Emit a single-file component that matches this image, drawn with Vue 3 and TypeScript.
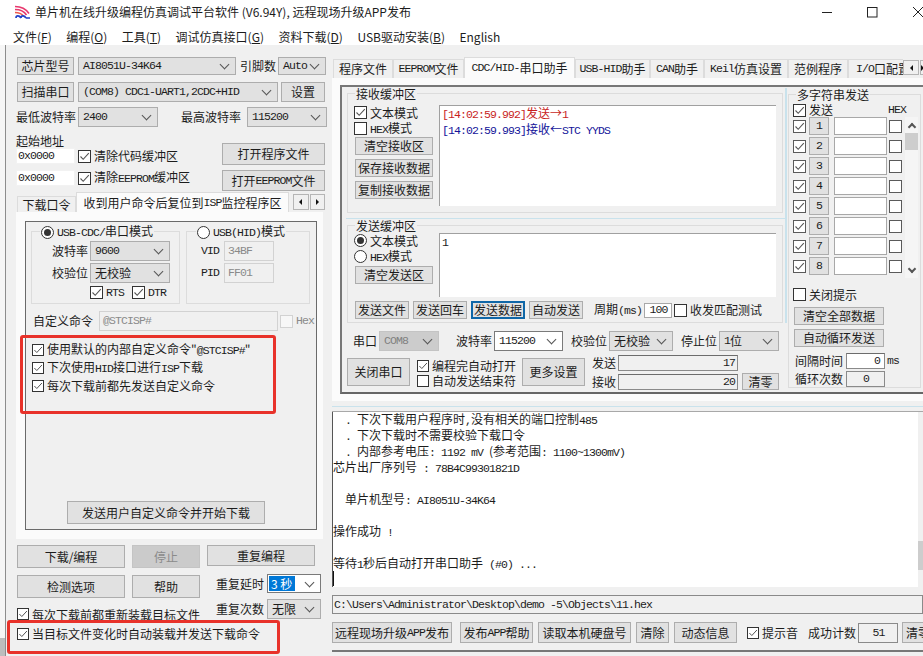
<script setup lang="ts">
const slots: number[] = [1, 2, 3, 4, 5, 6, 7, 8]
</script>

<template>
  <div class="win">
    <header class="title">
      <svg class="appicon" width="15" height="14" viewBox="0 0 15 14">
        <path d="M0 1.500C6 1.500 11 4 14 8.500" fill="none" stroke="#e8386e" stroke-width="1.600" />
        <path d="M0 4.500C5 4.500 9 6 11.500 10" fill="none" stroke="#e8386e" stroke-width="1.600" />
        <path d="M0 7.500C3.500 7.500 6.500 8.500 8.500 11" fill="none" stroke="#ee5a4a" stroke-width="1.600" />
        <path d="M1 13C1 10.500 4 10 6 13M6 13C6 10.500 9 10 11 13M11 13H15" fill="none" stroke="#2342c8" stroke-width="1.700" />
      </svg>
      <span class="ttext">单片机在线升级编程仿真调试平台软件 (V6.94Y), 远程现场升级APP发布</span>
      <div class="caps">
        <svg width="101" height="12" viewBox="0 0 101 12">
          <path d="M0 6.500H10" stroke="#222" fill="none" />
          <rect x="45.500" y="1.500" width="9.500" height="9.500" stroke="#222" fill="none" />
          <path d="M91 1L101 11M101 1L91 11" stroke="#222" fill="none" />
        </svg>
      </div>
    </header>
    <nav class="menu">
      <span>文件(<u>F</u>)</span>
      <span>编程(<u>O</u>)</span>
      <span>工具(<u>T</u>)</span>
      <span>调试仿真接口(<u>G</u>)</span>
      <span>资料下载(<u>D</u>)</span>
      <span>USB驱动安装(<u>B</u>)</span>
      <span>English</span>
    </nav>

    <div class="client">
      <div class="strip"></div>

      <section class="left">
        <div class="row h18 mt12 pl11">
          <button class="btn w57 h18">芯片型号</button>
          <div class="sel w158 h18 ml4"><span class="m">AI8051U-34K64</span></div>
          <span class="w36 ml4">引脚数</span>
          <div class="sel w48 h18 ml2"><span class="m">Auto</span></div>
        </div>
        <div class="row h20 mt7 pl11">
          <button class="btn w57 h20">扫描串口</button>
          <div class="sel w200 h20 ml4"><span class="m">(COM8) CDC1-UART1,2CDC+HID</span></div>
          <button class="btn w44 h20 ml3">设置</button>
        </div>
        <div class="row h20 mt5 pl10">
          <span class="w60">最低波特率</span>
          <div class="sel w80 h20 ml2"><span class="m">2400</span></div>
          <span class="w60 ml23">最高波特率</span>
          <div class="sel w80 h20 ml6"><span class="m">115200</span></div>
        </div>
        <div class="addr">
          <div class="addrl">
            <div class="row h14">起始地址</div>
            <div class="row h16">
              <div class="field w59 h16"><span class="m">0x0000</span></div>
              <i class="chk on ml3"></i><span class="ml3">清除代码缓冲区</span>
            </div>
            <div class="row h16 mt6">
              <div class="field w59 h16"><span class="m">0x0000</span></div>
              <i class="chk on ml3"></i><span class="ml3">清除<span class="m">EEPROM</span>缓冲区</span>
            </div>
          </div>
          <div class="addrr">
            <button class="btn w103 h22">打开程序文件</button>
            <button class="btn w103 h21 mt5">打开<span class="m">EEPROM</span>文件</button>
          </div>
        </div>

        <div class="ltabs">
          <div class="tab w59 h16">下载口令</div>
          <div class="tab on w213 h20">收到用户命令后复位到<span class="m">ISP</span>监控程序区</div>
          <div class="scroller ml4 w32">
            <span class="arr"><i class="tri l"></i></span>
            <span class="arr"><i class="tri r"></i></span>
          </div>
        </div>
        <div class="tabpanel">
          <div class="inner">
            <div class="groups">
              <div class="group g1">
                <div class="legend ml8"><i class="radio on"></i><span class="ml3"><span class="m">USB-CDC/</span>串口模式</span></div>
                <div class="row h20 mt2 pl20">
                  <span class="w36">波特率</span>
                  <div class="sel w80 h20 ml2"><span class="m">9600</span></div>
                </div>
                <div class="row h20 mt2 pl20">
                  <span class="w36">校验位</span>
                  <div class="sel w80 h20 ml2">无校验</div>
                </div>
                <div class="row h13 mt3 pl58">
                  <i class="chk on"></i><span class="m ml3">RTS</span>
                  <i class="chk on ml8"></i><span class="m ml3">DTR</span>
                </div>
              </div>
              <div class="group g2">
                <div class="legend ml9"><i class="radio"></i><span class="ml3"><span class="m">USB(HID)</span>模式</span></div>
                <div class="row h20 mt2 pl14">
                  <span class="m w18">VID</span>
                  <div class="field dim w50 h20 ml5"><span class="m">34BF</span></div>
                </div>
                <div class="row h20 mt2 pl14">
                  <span class="m w18">PID</span>
                  <div class="field dim w50 h20 ml5"><span class="m">FF01</span></div>
                </div>
              </div>
            </div>
            <div class="row h20 mt7 pl7">
              <span class="w60">自定义命令</span>
              <div class="field dim w179 h20 ml6"><span class="m">@STCISP#</span></div>
              <i class="chk dimchk ml2"></i><span class="m greyt ml3">Hex</span>
            </div>
            <div class="row h18 mt10 pl6"><i class="chk on s12"></i><span class="ml3">使用默认的内部自定义命令"<span class="m">@STCISP#</span>"</span></div>
            <div class="row h18 pl6"><i class="chk on s12"></i><span class="ml3">下次使用<span class="m">HID</span>接口进行<span class="m">ISP</span>下载</span></div>
            <div class="row h18 pl6"><i class="chk on s12"></i><span class="ml3">每次下载前都先发送自定义命令</span></div>
            <button class="btn w198 h23 sendbtn">发送用户自定义命令并开始下载</button>
          </div>
        </div>

        <div class="actions">
          <div class="actl">
            <div class="row h23">
              <button class="btn w108 h23">下载/编程</button>
              <button class="btn off w68 h23 ml7">停止</button>
            </div>
            <div class="row h23 mt7">
              <button class="btn w108 h23">检测选项</button>
              <button class="btn w68 h23 ml7">帮助</button>
            </div>
            <div class="row h12 mt10 clip"><i class="chk on s12"></i><span class="ml3">每次下载前都重新装载目标文件</span></div>
          </div>
          <div class="actr">
            <button class="btn w108 h21">重复编程</button>
            <div class="row h19 mt8">
              <span class="w48 ml9">重复延时</span>
              <div class="sel white w54 h19 ml3"><b class="hl">3 秒</b></div>
            </div>
            <div class="row h20 mt6">
              <span class="w48 ml9">重复次数</span>
              <div class="sel w54 h20 ml3">无限</div>
            </div>
          </div>
        </div>
        <div class="row h14 mt7 pl11"><i class="chk on s12"></i><span class="ml3">当目标文件变化时自动装载并发送下载命令</span></div>

        <div class="mark m1"></div>
        <div class="mark m2"></div>
      </section>

      <section class="right">
        <div class="rtabs">
          <div class="tab w60 h19 firsttab">程序文件</div>
          <div class="tab w71 h19"><span class="m">EEPROM</span>文件</div>
          <div class="tab on w111 h21"><span class="m">CDC/HID-</span>串口助手</div>
          <div class="tab w75 h19"><span class="m">USB-HID</span>助手</div>
          <div class="tab w54 h19"><span class="m">CAN</span>助手</div>
          <div class="tab w84 h19"><span class="m">Keil</span>仿真设置</div>
          <div class="tab w60 h19">范例程序</div>
          <div class="tab cut w55 h19"><span class="m">I/O</span>口配置</div>
          <div class="scroller rscroll w20">
            <span class="arr w16f"><i class="tri l"></i></span>
            <span class="arr"><i class="tri r"></i></span>
          </div>
        </div>

        <div class="rp">
          <div class="pane">
            <div class="pl">
              <div class="group recv">
                <div class="legend ml7">接收缓冲区</div>
                <div class="gbody">
                  <div class="gcol">
                    <div class="row h13 mt1"><i class="chk on"></i><span class="ml3">文本模式</span></div>
                    <div class="row h13 mt3"><i class="chk"></i><span class="ml3"><span class="m">HEX</span>模式</span></div>
                    <button class="btn w78 h18 mt2 gbtn">清空接收区</button>
                    <button class="btn w78 h18 mt4 gbtn">保存接收数据</button>
                    <button class="btn w78 h18 mt4 gbtn">复制接收数据</button>
                  </div>
                  <div class="ta recvta">
                    <div class="red"><span class="m">[14:02:59.992]</span>发送→<span class="m">1</span></div>
                    <div class="navy"><span class="m">[14:02:59.993]</span>接收←<span class="m">STC YYDS</span></div>
                  </div>
                </div>
              </div>
              <div class="hline"></div>
              <div class="group send">
                <div class="legend ml7">发送缓冲区</div>
                <div class="gbody nomt">
                  <div class="gcol">
                    <div class="row h13 mt1"><i class="radio on"></i><span class="ml3">文本模式</span></div>
                    <div class="row h13 mt3"><i class="radio"></i><span class="ml3"><span class="m">HEX</span>模式</span></div>
                    <button class="btn w78 h18 mt3 gbtn">清空发送区</button>
                  </div>
                  <div class="ta sendta"><div><span class="m">1</span></div></div>
                </div>
                <div class="row h18 mt4 pl7">
                  <button class="btn w54 h18">发送文件</button>
                  <button class="btn w54 h18 ml4">发送回车</button>
                  <button class="btn focus w54 h18 ml4">发送数据</button>
                  <button class="btn w54 h18 ml4">自动发送</button>
                  <span class="ml11">周期<span class="m">(ms)</span></span>
                  <div class="field w28 h15 ml2 center"><span class="m">100</span></div>
                  <i class="chk ml2"></i><span class="ml3">收发匹配测试</span>
                </div>
              </div>
              <div class="row h20 mt8 pl11">
                <span class="w24">串口</span>
                <div class="sel off w60 h20 ml2"><span class="m">COM8</span></div>
                <span class="w36 ml17">波特率</span>
                <div class="sel white w69 h20 ml2"><span class="m">115200</span></div>
                <span class="w36 ml8">校验位</span>
                <div class="sel w64 h20 ml2">无校验</div>
                <span class="w36 ml8">停止位</span>
                <div class="sel w60 h20 ml2"><span class="m">1</span>位</div>
              </div>
              <div class="sreg">
                <button class="btn w63 h28 mt3">关闭串口</button>
                <div class="sregc">
                  <div class="row h13 mt4"><i class="chk on s12"></i><span class="ml3">编程完自动打开</span></div>
                  <div class="row h13 mt2"><i class="chk s12"></i><span class="ml3">自动发送结束符</span></div>
                </div>
                <button class="btn w63 h28 mt3">更多设置</button>
                <div class="count">
                  <div class="row h16">
                    <span class="w26">发送</span>
                    <div class="field num w120 h16"><span class="m">17</span></div>
                  </div>
                  <div class="row h17 mt2">
                    <span class="w26">接收</span>
                    <div class="field num w120 h16"><span class="m">20</span></div>
                    <button class="btn w37 h17 ml4">清零</button>
                  </div>
                </div>
              </div>
            </div>
            <div class="vline"></div>
            <div class="pr">
              <div class="group multi">
                <div class="legend ml7">多字符串发送</div>
                <div class="row h14 mt1 pl4">
                  <i class="chk on"></i><span class="ml3 w24">发送</span><span class="m hexhd">HEX</span>
                </div>
                <div class="mlist">
                  <div class="mrows">
                    <div v-for="n in slots" :key="n" class="mrow">
                      <i class="chk on grey"></i>
                      <button class="btn w20 h18 ml3"><span class="m">{{ n }}</span></button>
                      <div class="field w53 h18 ml5"></div>
                      <i class="chk grey ml2"></i>
                    </div>
                  </div>
                  <div class="vscroll">
                    <span class="sarrow"><i class="chev up"></i></span>
                    <span class="thumb"></span>
                    <span class="sfill"></span>
                    <span class="sarrow"><i class="chev"></i></span>
                  </div>
                </div>
                <div class="row h13 mt10 pl4"><i class="chk"></i><span class="ml3">关闭提示</span></div>
                <button class="btn w90 h18 mt6 ml5 block">清空全部数据</button>
                <button class="btn w90 h18 mt4 ml5 block">自动循环发送</button>
                <div class="row h16 mt6 pl6">
                  <span class="w48">间隔时间</span>
                  <div class="field num w39 h16 ml3"><span class="m">0</span></div>
                  <span class="m ml2">ms</span>
                </div>
                <div class="row h16 mt2 pl6">
                  <span class="w48">循环次数</span>
                  <div class="field dim2 center w39 h16 ml3"><span class="m">0</span></div>
                </div>
              </div>
            </div>
          </div>
        </div>

        <div class="sep"></div>
        <div class="log">
          <div class="lines">
            <div><span class="m">&nbsp;&nbsp;.&nbsp;</span>下次下载用户程序时<span class="m">,</span>没有相关的端口控制<span class="m">485</span></div>
            <div><span class="m">&nbsp;&nbsp;.&nbsp;</span>下次下载时不需要校验下载口令</div>
            <div><span class="m">&nbsp;&nbsp;.&nbsp;</span>内部参考电压<span class="m">: 1192 mV </span>(参考范围<span class="m">: 1100~1300mV)</span></div>
            <div>芯片出厂序列号<span class="m"> : 78B4C99301821D</span></div>
            <div class="blank"></div>
            <div><span class="m">&nbsp;&nbsp;</span>单片机型号<span class="m">: AI8051U-34K64</span></div>
            <div class="blank"></div>
            <div>操作成功<span class="m"> !</span></div>
            <div class="blank"></div>
            <div>等待<span class="m">1</span>秒后自动打开串口助手<span class="m"> (#0) ...</span></div>
            <div class="caret"></div>
          </div>
          <div class="logbar"><span class="logthumb"></span></div>
        </div>
        <div class="path"><span class="m">C:\Users\Administrator\Desktop\demo -5\Objects\11.hex</span></div>
        <div class="row h21 mt8">
          <button class="btn w120 h21">远程现场升级<span class="m">APP</span>发布</button>
          <button class="btn w73 h21 ml8">发布<span class="m">APP</span>帮助</button>
          <button class="btn w93 h21 ml5">读取本机硬盘号</button>
          <button class="btn w33 h21 ml5">清除</button>
          <button class="btn w63 h21 ml5">动态信息</button>
          <i class="chk on s12 ml10"></i><span class="ml3 w36">提示音</span>
          <span class="w48 ml10">成功计数</span>
          <div class="field dim2 center w40 h20 ml2"><span class="m">51</span></div>
          <button class="btn lastbtn h21 ml4">清零</button>
        </div>
        <div class="endline"></div>
      </section>
    </div>
  </div>
</template>

<style>
html, body { margin: 0; background: #fff; }
</style>

<style scoped>
* { box-sizing: border-box; }
.win {
  width: 923px; height: 656px; overflow: hidden; background: #fff; color: #1c1c1c;
  font: 12px/14px "Noto Sans CJK SC", "Noto Sans", sans-serif;
}
.m { font-family: "Liberation Mono", "Noto Sans CJK SC", monospace; font-size: 11.500px; letter-spacing: -0.900px; }
i { display: block; flex: none; font-style: normal; }
b { font-weight: normal; }

.title { height: 23px; display: flex; align-items: center; padding-left: 15px; }
.appicon { flex: none; }
.ttext { margin-left: 5px; white-space: nowrap; }
.caps { margin-left: auto; width: 101px; height: 12px; }
.caps svg { display: block; }
.menu { height: 22px; display: flex; align-items: center; gap: 14.500px; padding: 5px 0 0 13px; white-space: nowrap; }
.menu span { display: block; }

.client { display: flex; height: 611px; }
.strip { width: 6px; flex: none; border-right: 1px solid #8d8d8d; background: linear-gradient(#f6f6f6 593px, #bdbdbd 593px); }
.left { width: 326px; flex: none; background: #f0f0f0; position: relative; }
.right { width: 591px; flex: none; background: #f0f0f0; overflow: hidden; }

.row { display: flex; align-items: center; white-space: nowrap; }
.btn {
  display: flex; align-items: center; justify-content: center; flex: none; padding: 0;
  background: #e1e1e1; border: 1px solid #adadad; font: inherit; color: inherit; white-space: nowrap;
}
.btn.off { background: #cbcbcb; color: #8a8a8a; border-color: #c4c4c4; }
.btn.focus { border: 2px solid #0f67a8; }
.block { display: flex; }
.sel {
  position: relative; display: flex; align-items: center; flex: none; padding-left: 4px;
  background: #e1e1e1; border: 1px solid #adadad; white-space: nowrap;
}
.sel::after {
  content: ""; position: absolute; right: 7px; top: 50%; width: 6px; height: 6px; margin-top: -5px;
  border-right: 1px solid #555; border-bottom: 1px solid #555; transform: rotate(45deg);
}
.sel.white { background: #fff; border-color: #7a7a7a; }
.sel.off { background: #cccccc; border-color: #c4c4c4; color: #808080; }
.hl { display: block; width: 26px; height: 15px; margin-left: -3px; padding-left: 2px; background: #0078d7; color: #fff; line-height: 15px; }
.field {
  display: flex; align-items: center; flex: none; background: #fff; padding-left: 1px;
  border: 1px solid #a8a8a8; white-space: nowrap;
}
.addrl .field { border-color: #f2f2f2; }
.field.dim { background: #f0f0f0; border-color: #d2d2d2; color: #8a8a8a; padding-left: 3px; }
.field.dim2 { background: #f0f0f0; border-color: #8a8a8a; }
.field.num { justify-content: flex-end; padding-right: 2px; background: #f0f0f0; border: 1px solid #8a8a8a; border-top-color: #6c6c6c; }
.w39.num { background: #fff; padding-right: 4px; }
.field.center { justify-content: center; }
.greyt { color: #8a8a8a; }

.chk { width: 13px; height: 13px; border: 1px solid #333; background: #fff center / 11px 11px no-repeat; }
.chk.s12 { width: 12px; height: 12px; background-size: 10px 10px; }
.chk.grey { border-color: #5a5a5a; }
.chk.dimchk { border-color: #d2d2d2; background-color: #f7f7f7; }
.chk.on {
  background-image: url("data:image/svg+xml,%3Csvg xmlns='http://www.w3.org/2000/svg' viewBox='0 0 11 11'%3E%3Cpath d='M1.500 5.500L4.200 8.300L9.800 2.200' fill='none' stroke='%23555' stroke-width='1.100'/%3E%3C/svg%3E");
}
.radio { position: relative; width: 13px; height: 13px; border: 1px solid #333; border-radius: 50%; background: #fff; }
.radio.on::after { content: ""; position: absolute; left: 2px; top: 2px; width: 7px; height: 7px; border-radius: 50%; background: #333; }

.addr { display: flex; margin-top: 7px; padding-left: 10px; }
.addrl { width: 206px; flex: none; }
.addrr { padding-top: 9px; display: flex; flex-direction: column; }

.ltabs { display: flex; align-items: flex-end; height: 20px; margin-top: 1px; margin-left: 11px; }
.tab {
  display: flex; align-items: center; justify-content: center; flex: none; white-space: nowrap;
  background: #f0f0f0; border: 1px solid #dcdcdc; border-bottom: 0;
}
.tab.on { background: #fbfbfb; }
.tab.cut { justify-content: flex-start; padding-left: 7px; overflow: hidden; border-right: 0; }
.firsttab { margin-left: 1px; }
.scroller { display: flex; flex: none; align-self: flex-start; margin-top: 2px; height: 16px; gap: 1px; }
.arr { flex: 1; display: flex; align-items: center; justify-content: center; border: 1px solid #b5b5b5; background: #f0f0f0; }
.tri { width: 0; height: 0; border: 3px solid transparent; }
.tri.l { border-right-color: #111; border-left-width: 0; }
.tri.r { border-left-color: #111; border-right-width: 0; }

.tabpanel { width: 307px; height: 327px; margin-left: 10px; padding: 9px 0 0 9px; background: #fbfbfb; }
.inner { width: 292px; height: 309px; border: 1px solid #6a6a6a; background: #f0f0f0; }
.groups { display: flex; gap: 6px; margin: 9px 0 0 5px; }
.group { border: 1px solid #dcdcdc; }
.g1 { width: 149px; height: 73px; }
.g2 { width: 124px; height: 73px; }
.legend { display: flex; align-items: center; width: fit-content; height: 14px; margin-top: -7px; padding: 0 1px; background: #f0f0f0; white-space: nowrap; }
.sendbtn { margin: 106px 0 0 41px; }

.actions { display: flex; margin-top: 6px; padding-left: 11px; height: 75px; }
.actl { width: 190px; flex: none; }
.clip { overflow: hidden; align-items: flex-start; }

.mark { position: absolute; border: 3px solid #e8322a; border-radius: 3px; pointer-events: none; }
.m1 { left: 14px; top: 290px; width: 256px; height: 79px; }
.m2 { left: 1px; top: 575px; width: 273px; height: 34px; }

.rtabs { display: flex; align-items: flex-end; height: 33px; }
.rscroll { margin-top: 15px; height: 15px; }
.w16f { flex: none; width: 16px; }
.rp { height: 323px; padding: 7px 0 0 8px; background: #fbfbfb; }
.pane { display: flex; height: 309px; background: #f0f0f0; border-left: 2px solid #777; border-top: 2px solid #777; border-bottom: 2px solid #666; }
.pl { width: 443px; flex: none; }
.vline { width: 2px; flex: none; background: #c9e2ec; margin-top: 1px; height: 235px; }
.pr { width: 134px; flex: none; }
.recv { width: 436px; height: 120px; margin: 6px 0 0 5px; }
.send { width: 436px; height: 98px; margin: 6px 0 0 5px; }
.hline { width: 439px; height: 1px; margin: 5px 0 0 4px; background: #c9e2ec; }
.gbody { display: flex; margin-top: 4px; }
.gbody.nomt { margin-top: 0; }
.gcol { width: 91px; flex: none; padding-left: 6px; }
.gbtn { margin-left: 1px; }
.ta { width: 337px; flex: none; background: #fff; border-left: 1px solid #a0a0a0; border-top: 1px solid #a0a0a0; padding: 0 2px; line-height: 16px; }
.ta > div { height: 16px; }
.ta > div:first-child { margin-top: -1px; }
.recvta { height: 101px; }
.sendta { height: 64px; }
.red { color: #c81e1e; }
.navy { color: #14149a; }
.sreg { display: flex; height: 34px; margin-top: 4px; padding-left: 5px; }
.sregc { width: 105px; flex: none; margin-left: 7px; }
.count { margin-left: 7px; }

.multi { width: 133px; height: 294px; margin: 7px 0 0 1px; }
.hexhd { margin-left: 55px; }
.mlist { display: flex; height: 161px; }
.mrows { width: 116px; flex: none; padding-left: 4px; }
.mrow { display: flex; align-items: center; height: 20px; padding-bottom: 2px; }
.vscroll { width: 13px; flex: none; display: flex; flex-direction: column; background: #f5f5f5; }
.sarrow { height: 16px; flex: none; display: flex; align-items: center; justify-content: center; }
.thumb { height: 17px; flex: none; background: #cdcdcd; }
.sfill { flex: 1; }
.chev { width: 6px; height: 6px; margin-top: -3px; border-right: 2px solid #555; border-bottom: 2px solid #555; transform: rotate(45deg); }
.chev.up { margin-top: 3px; transform: rotate(225deg); }

.sep { height: 6px; margin-top: 5px; border-top: 1px solid #c9e2ec; border-bottom: 1px solid #a8a8a8; background: #f0f0f0; }
.log { display: flex; height: 175px; background: #fff; border-left: 1px solid #555; }
.lines { flex: 1; line-height: 16px; white-space: nowrap; margin-top: -1px; }
.lines > div { height: 16px; }
.lines > .caret { width: 1px; height: 15px; background: #111; }
.logbar { width: 5px; flex: none; background: #f0f0f0; display: flex; flex-direction: column; }
.logthumb { display: block; height: 29px; margin-top: 129px; background: #cdcdcd; }
.path { display: flex; align-items: center; height: 19px; margin-top: 8px; padding-left: 1px; border: 1px solid #8a8a8a; background: #f0f0f0; white-space: nowrap; }
.lastbtn { justify-content: flex-start; padding-left: 3px; width: 60px; }
.endline { height: 2px; margin-top: 7px; background: #777; }

.h12 { height: 12px; } .h13 { height: 13px; line-height: 13px; } .h14 { height: 14px; } .h15 { height: 15px; } .h16 { height: 16px; }
.h17 { height: 17px; } .h18 { height: 18px; } .h19 { height: 19px; } .h20 { height: 20px; } .h21 { height: 21px; }
.h22 { height: 22px; } .h23 { height: 23px; } .h28 { height: 28px; }
.w18 { width: 18px; } .w20 { width: 20px; } .w24 { width: 24px; flex: none; } .w26 { width: 26px; flex: none; }
.w28 { width: 28px; } .w32 { width: 32px; } .w33 { width: 33px; } .w36 { width: 36px; flex: none; } .w37 { width: 37px; }
.w39 { width: 39px; } .w40 { width: 40px; } .w44 { width: 44px; } .w48 { width: 48px; flex: none; } .w50 { width: 50px; }
.w53 { width: 53px; } .w54 { width: 54px; } .w55 { width: 55px; } .w57 { width: 57px; } .w59 { width: 59px; }
.w60 { width: 60px; flex: none; } .w63 { width: 63px; } .w64 { width: 64px; } .w68 { width: 68px; } .w69 { width: 69px; }
.w71 { width: 71px; } .w73 { width: 73px; } .w75 { width: 75px; } .w78 { width: 78px; } .w80 { width: 80px; }
.w84 { width: 84px; } .w90 { width: 90px; } .w93 { width: 93px; } .w103 { width: 103px; } .w108 { width: 108px; }
.w111 { width: 111px; } .w120 { width: 120px; } .w158 { width: 158px; } .w179 { width: 179px; } .w198 { width: 198px; }
.w200 { width: 200px; } .w213 { width: 213px; }
.ml2 { margin-left: 2px; } .ml3 { margin-left: 3px; } .ml4 { margin-left: 4px; } .ml5 { margin-left: 5px; }
.ml6 { margin-left: 6px; } .ml7 { margin-left: 7px; } .ml8 { margin-left: 8px; } .ml9 { margin-left: 9px; }
.ml10 { margin-left: 10px; } .ml11 { margin-left: 11px; } .ml17 { margin-left: 17px; } .ml23 { margin-left: 23px; }
.mt1 { margin-top: 1px; } .mt2 { margin-top: 2px; } .mt3 { margin-top: 3px; } .mt4 { margin-top: 4px; } .mt5 { margin-top: 5px; }
.mt6 { margin-top: 6px; } .mt7 { margin-top: 7px; } .mt8 { margin-top: 8px; } .mt10 { margin-top: 10px; } .mt12 { margin-top: 12px; }
.pl4 { padding-left: 4px; } .pl6 { padding-left: 6px; } .pl7 { padding-left: 7px; } .pl10 { padding-left: 10px; } .pl11 { padding-left: 11px; }
.pl14 { padding-left: 14px; } .pl20 { padding-left: 20px; } .pl58 { padding-left: 58px; }
</style>
